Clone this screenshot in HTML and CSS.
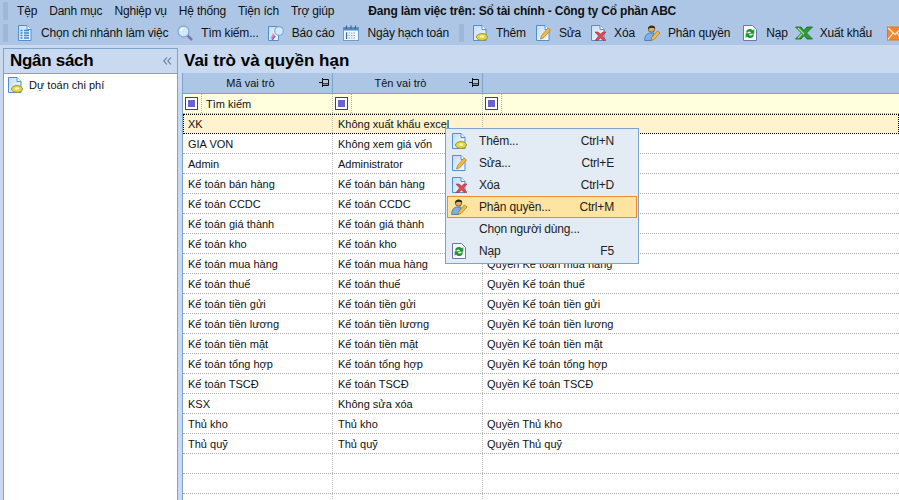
FILE: index.html
```html
<!DOCTYPE html>
<html lang="vi">
<head>
<meta charset="utf-8">
<title>Vai trò và quyền hạn</title>
<link rel="stylesheet" href="styles.css">
</head>
<body>
<svg class="defs" width="0" height="0">
  <defs>
    <linearGradient id="pg" x1="0" y1="0" x2="1" y2="1">
      <stop offset="0" stop-color="#c4dcf5"/>
      <stop offset="1" stop-color="#f6fbff"/>
    </linearGradient>
    <symbol id="page" viewBox="0 0 16 16">
      <path d="M1.500.5H10L14 4.500V15.500H1.500Z" fill="url(#pg)" stroke="#4f90d0"/>
      <path d="M10 .5V4.500H14" fill="#fff" stroke="#4f90d0"/>
    </symbol>
    <symbol id="add" viewBox="0 0 16 16">
      <use href="#page" width="16" height="16"/>
      <ellipse cx="10" cy="12" rx="5.500" ry="3.400" fill="#e3d648" stroke="#a0932a"/>
      <ellipse cx="10" cy="11.500" rx="2.200" ry="1.200" fill="#f9f3ab"/>
    </symbol>
    <symbol id="edit" viewBox="0 0 16 16">
      <use href="#page" width="16" height="16"/>
      <path d="M5.500 14 6.500 10.500 13 3 15.500 5 9 12.500Z" fill="#f0bd48" stroke="#b5842a" stroke-width=".8"/>
    </symbol>
    <symbol id="del" viewBox="0 0 16 16">
      <use href="#page" width="16" height="16"/>
      <path d="M5 7H8L10.500 9 13 7H16L12.500 11 16 15.500H13L10.500 13 8 15.500H5L8.500 11Z" fill="#dc4a52" stroke="#a82f38" stroke-width=".6"/>
    </symbol>
    <symbol id="user" viewBox="0 0 16 16">
      <circle cx="7.500" cy="4" r="3.200" fill="#dfae63" stroke="#6b4f24" stroke-width=".8"/>
      <path d="M4 4C4 0 11.500-.500 11.200 3.500 8.500 2.300 6.500 3 4 4Z" fill="#2b2618"/>
      <path d="M.7 15.500C.5 10 3.500 8 6.500 8H10L7 15.500Z" fill="#7db1e6" stroke="#3f7cbd" stroke-width=".9"/>
      <path d="M7 15.500 8 12 13.500 6 16 8 10 14.500Z" fill="#f0bd48" stroke="#a97a20" stroke-width=".8"/>
    </symbol>
    <symbol id="refresh" viewBox="0 0 14 16">
      <path d="M.5.5H9.500L13.500 4.500V15.500H.5Z" fill="#fbfbff" stroke="#6b78b0"/>
      <path d="M3 7.500C3.500 3.500 8 3 10 5.500L11.300 4V8.700H6.500L8 7.300C7 6 5.200 6.300 4.800 7.500ZM11 9.500C10.500 13.500 6 14 4 11.500L2.700 13V8.300H7.500L6 9.700C7 11 8.800 10.700 9.200 9.500Z" fill="#169a2b"/>
    </symbol>
    <symbol id="excel" viewBox="0 0 18 14">
      <path d="M.5 1H6L9 4.500 12 1H17.500L11.500 7 17.500 13H12L9 9.500 6 13H.5L6.500 7Z" fill="#2f9a3a" stroke="#136b21" stroke-width=".8"/>
      <path d="M3 2 9 8M3 12 7 8" stroke="#a6e097" stroke-width="1.200"/>
    </symbol>
    <symbol id="mail" viewBox="0 0 16 14">
      <rect x=".5" y=".5" width="15" height="13" fill="#f5862e" stroke="#e0761f"/>
      <path d="M1 1.500 8 8 15 1.500M1 13 6 6.500M15 13 10 6.500" fill="none" stroke="#fff0dd" stroke-width="1.200"/>
    </symbol>
    <symbol id="list" viewBox="0 0 16 16">
      <use href="#page" width="16" height="16"/>
      <path d="M3.500 5.500H5.500M7 5.500H12M3.500 8H5.500M7 8H12M3.500 10.500H5.500M7 10.500H12M3.500 13H5.500M7 13H12" stroke="#3f86cc" stroke-width="1.300"/>
    </symbol>
    <symbol id="search" viewBox="0 0 16 16">
      <path d="M10 10 15 15" stroke="#8d6fb8" stroke-width="2.600"/>
      <circle cx="6.500" cy="6.500" r="5.500" fill="#d3e9fa" stroke="#7fa9d4" stroke-width="1.300"/>
      <path d="M3.500 6C4 4.300 5.200 3.300 6.800 3.200" fill="none" stroke="#fff" stroke-width="1.300"/>
    </symbol>
    <symbol id="report" viewBox="0 0 16 16">
      <path d="M.5 1.500H10.500V15.500H.5Z" fill="url(#pg)" stroke="#4f90d0"/>
      <path d="M2 14 5 8 8 12Z" fill="#d98fb5"/>
      <path d="M7 11 4 15" stroke="#8d6fb8" stroke-width="1.800"/>
      <circle cx="11" cy="6" r="4.300" fill="#d3e9fa" stroke="#7fa9d4" stroke-width="1.200"/>
    </symbol>
    <symbol id="calendar" viewBox="0 0 16 16">
      <rect x=".5" y="2.500" width="15" height="13" fill="#f4f8fd" stroke="#6f9bd0"/>
      <rect x=".5" y="2.500" width="15" height="3" fill="#4d8cc8"/>
      <path d="M3.500.5V4M8 .5V4M12.500.5V4" stroke="#46648c" stroke-width="1.200"/>
      <path d="M3 8H13M3 10.500H13M3 13H13" stroke="#7fa8d8" stroke-dasharray="1.500 1"/>
      <path d="M3.500 7.500V14" stroke="#2e6fb8" stroke-width="1.200"/>
    </symbol>
    <symbol id="pin" viewBox="0 0 10 9">
      <path d="M0 4.500H3M3.500 1.500H9.500V7.500H3.500ZM3.500 0V9M3.500 5.800H9.500" fill="none" stroke="#111"/>
    </symbol>
    <symbol id="chev" viewBox="0 0 9 8">
      <path d="M4 .5.800 4 4 7.500M8 .5 4.800 4 8 7.500" fill="none" stroke="#5a7799" stroke-width="1.100"/>
    </symbol>
  </defs>
</svg>

<div class="topbar">
  <nav class="menubar">
    <span class="grip"></span>
    <span class="menu-item">Tệp</span>
    <span class="menu-item">Danh mục</span>
    <span class="menu-item">Nghiệp vụ</span>
    <span class="menu-item">Hệ thống</span>
    <span class="menu-item">Tiện ích</span>
    <span class="menu-item">Trợ giúp</span>
    <span class="working">Đang làm việc trên: Sổ tài chính - Công ty Cổ phần ABC</span>
  </nav>
  <div class="toolbar">
    <span class="grip"></span>
    <span class="tool tool-first"><svg class="ico"><use href="#list"/></svg>Chọn chi nhánh làm việc</span>
    <span class="tool"><svg class="ico"><use href="#search"/></svg>Tìm kiếm...</span>
    <span class="tool"><svg class="ico"><use href="#report"/></svg>Báo cáo</span>
    <span class="tool"><svg class="ico"><use href="#calendar"/></svg>Ngày hạch toán</span>
    <span class="grip grip-mid"></span>
    <span class="tool"><svg class="ico"><use href="#add"/></svg>Thêm</span>
    <span class="tool"><svg class="ico"><use href="#edit"/></svg>Sửa</span>
    <span class="tool"><svg class="ico"><use href="#del"/></svg>Xóa</span>
    <span class="tool tool-wide"><svg class="ico"><use href="#user"/></svg>Phân quyền</span>
    <span class="tool tool-narrow"><svg class="ico"><use href="#refresh"/></svg>Nạp</span>
    <span class="tool"><svg class="ico ico-excel"><use href="#excel"/></svg>Xuất khẩu</span>
    <span class="sep"></span>
    <svg class="ico ico-mail"><use href="#mail"/></svg>
  </div>
</div>

<div class="workspace">
  <aside class="sidebar">
    <header class="side-head">
      <span>Ngân sách</span>
      <svg class="chev"><use href="#chev"/></svg>
    </header>
    <div class="side-body">
      <div class="side-item"><svg class="ico"><use href="#add"/></svg>Dự toán chi phí</div>
    </div>
  </aside>
  <main class="content">
    <h1 class="title">Vai trò và quyền hạn</h1>
    <div class="grid">
      <div class="row head">
        <div class="cell">Mã vai trò<svg class="pin"><use href="#pin"/></svg></div>
        <div class="cell">Tên vai trò<svg class="pin"><use href="#pin"/></svg></div>
        <div class="cell"></div>
      </div>
      <div class="row filter">
        <div class="cell"><span class="check-wrap"><span class="check"></span></span>Tìm kiếm</div>
        <div class="cell"><span class="check-wrap"><span class="check"></span></span></div>
        <div class="cell"><span class="check-wrap"><span class="check"></span></span></div>
      </div>
      <div class="row selected"><div class="cell">XK</div><div class="cell">Không xuất khẩu excel</div><div class="cell"></div></div>
      <div class="row"><div class="cell">GIA VON</div><div class="cell">Không xem giá vốn</div><div class="cell"></div></div>
      <div class="row"><div class="cell">Admin</div><div class="cell">Administrator</div><div class="cell"></div></div>
      <div class="row"><div class="cell">Kế toán bán hàng</div><div class="cell">Kế toán bán hàng</div><div class="cell">Quyền Kế toán bán hàng</div></div>
      <div class="row"><div class="cell">Kế toán CCDC</div><div class="cell">Kế toán CCDC</div><div class="cell">Quyền Kế toán CCDC</div></div>
      <div class="row"><div class="cell">Kế toán giá thành</div><div class="cell">Kế toán giá thành</div><div class="cell">Quyền Kế toán giá thành</div></div>
      <div class="row"><div class="cell">Kế toán kho</div><div class="cell">Kế toán kho</div><div class="cell">Quyền Kế toán kho</div></div>
      <div class="row"><div class="cell">Kế toán mua hàng</div><div class="cell">Kế toán mua hàng</div><div class="cell">Quyền Kế toán mua hàng</div></div>
      <div class="row"><div class="cell">Kế toán thuế</div><div class="cell">Kế toán thuế</div><div class="cell">Quyền Kế toán thuế</div></div>
      <div class="row"><div class="cell">Kế toán tiền gửi</div><div class="cell">Kế toán tiền gửi</div><div class="cell">Quyền Kế toán tiền gửi</div></div>
      <div class="row"><div class="cell">Kế toán tiền lương</div><div class="cell">Kế toán tiền lương</div><div class="cell">Quyền Kế toán tiền lương</div></div>
      <div class="row"><div class="cell">Kế toán tiền mặt</div><div class="cell">Kế toán tiền mặt</div><div class="cell">Quyền Kế toán tiền mặt</div></div>
      <div class="row"><div class="cell">Kế toán tổng hợp</div><div class="cell">Kế toán tổng hợp</div><div class="cell">Quyền Kế toán tổng hợp</div></div>
      <div class="row"><div class="cell">Kế toán TSCĐ</div><div class="cell">Kế toán TSCĐ</div><div class="cell">Quyền Kế toán TSCĐ</div></div>
      <div class="row"><div class="cell">KSX</div><div class="cell">Không sửa xóa</div><div class="cell"></div></div>
      <div class="row"><div class="cell">Thủ kho</div><div class="cell">Thủ kho</div><div class="cell">Quyền Thủ kho</div></div>
      <div class="row"><div class="cell">Thủ quỹ</div><div class="cell">Thủ quỹ</div><div class="cell">Quyền Thủ quỹ</div></div>
      <div class="row"><div class="cell"></div><div class="cell"></div><div class="cell"></div></div>
      <div class="row"><div class="cell"></div><div class="cell"></div><div class="cell"></div></div>
      <div class="row"><div class="cell"></div><div class="cell"></div><div class="cell"></div></div>
    </div>
  </main>
</div>

<div class="context-menu">
  <div class="cm-item"><svg class="ico"><use href="#add"/></svg><span class="cm-label">Thêm...</span><span class="cm-key">Ctrl+N</span></div>
  <div class="cm-item"><svg class="ico"><use href="#edit"/></svg><span class="cm-label">Sửa...</span><span class="cm-key">Ctrl+E</span></div>
  <div class="cm-item"><svg class="ico"><use href="#del"/></svg><span class="cm-label">Xóa</span><span class="cm-key">Ctrl+D</span></div>
  <div class="cm-item active"><svg class="ico"><use href="#user"/></svg><span class="cm-label">Phân quyền...</span><span class="cm-key">Ctrl+M</span></div>
  <div class="cm-item"><span class="ico"></span><span class="cm-label">Chọn người dùng...</span></div>
  <div class="cm-item"><svg class="ico"><use href="#refresh"/></svg><span class="cm-label">Nạp</span><span class="cm-key">F5</span></div>
</div>
</body>
</html>
```
FILE: styles.css
```css
* { box-sizing: border-box; }
html, body { height: 100%; }
body {
  margin: 0;
  width: 899px;
  height: 500px;
  overflow: hidden;
  position: relative;
  background: #c9daf0;
  color: #111;
  font: 12px "Liberation Sans", Arial, sans-serif;
  letter-spacing: -0.18px;
  display: flex;
  flex-direction: column;
}
.defs { position: absolute; }
.topbar { background: #adc6e5; height: 45px; flex: none; }
.menubar, .toolbar { display: flex; align-items: center; white-space: nowrap; }
.menubar { height: 21px; }
.toolbar { height: 24px; }
.grip {
  width: 5px;
  height: 18px;
  margin-left: 3px;
  background-image: radial-gradient(#8ea7c6 0.6px, transparent 0.8px);
  background-size: 2px 2px;
  flex: none;
}
.menu-item { margin-left: 9px; margin-right: 3px; }
.working { font-weight: bold; margin-left: 31px; }
.ico { width: 16px; height: 16px; flex: none; margin-right: 8px; display: block; }
.tool { display: flex; align-items: center; margin-right: 9px; }
.tool-first { margin-left: 9px; }
.tool-wide { margin-right: 12px; }
.tool-narrow { margin-right: 7px; }
.ico-excel { width: 18px; height: 14px; margin-right: 7px; }
.grip-mid { margin: 0 8px 0 1px; }
.sep { width: 2px; height: 16px; background: #8fb0d8; margin: 0 6px 0 0; }
.ico-mail { margin: 0; height: 15px; }
.workspace { flex: 1; display: flex; padding: 3px 0 0 3px; min-height: 0; }
.sidebar {
  width: 175px;
  flex: none;
  display: flex;
  flex-direction: column;
  border: 1px solid #7ea3cc;
  border-bottom: 0;
  background: #fff;
}
.side-head {
  height: 25px;
  flex: none;
  background: #c9daf0;
  border-bottom: 1px solid #7ea3cc;
  display: flex;
  align-items: center;
  justify-content: space-between;
  padding: 0 5px 0 6px;
  font-size: 17px;
  font-weight: bold;
  letter-spacing: -0.3px;
  color: #000;
}
.chev { width: 9px; height: 8px; }
.side-item { display: flex; align-items: center; height: 22px; padding-left: 3px; font-size: 11px; letter-spacing: 0; }
.side-item .ico { margin-right: 6px; }
.content { flex: 1; min-width: 0; display: flex; flex-direction: column; margin-left: 4px; }
.title {
  margin: 0;
  height: 25px;
  flex: none;
  display: flex;
  align-items: center;
  padding-left: 2px;
  font-size: 17px;
  font-weight: bold;
  letter-spacing: 0;
  color: #000;
}
.grid { flex: 1; background: #fff; border-left: 1px solid #7ea3cc; overflow: hidden; font-size: 11px; letter-spacing: 0; }
.row { display: grid; grid-template-columns: 150px 150px 1fr; height: 20px; border-bottom: 1px dotted #aaa; }
.cell {
  display: flex;
  align-items: center;
  padding-left: 5px;
  border-right: 1px dotted #bbb;
  white-space: nowrap;
  overflow: hidden;
  min-width: 0;
}
.cell:last-child { border-right: 0; padding-left: 4px; }
.head { height: 21px; background: #adc6e5; border-bottom: 1px solid #7ea3cc; }
.head .cell { justify-content: center; position: relative; border-right: 1px solid #7ea3cc; padding: 0 14px 0 0; }
.head .cell:last-child { border-right: 0; }
.pin { position: absolute; right: 3px; top: 5px; width: 10px; height: 9px; }
.filter { background: #ffffde; }
.filter .cell, .filter .cell:last-child { padding-left: 2px; }
.check-wrap {
  align-self: stretch;
  width: 17px;
  display: flex;
  align-items: center;
  margin-right: 4px;
  border-right: 1px dotted #aaa;
  flex: none;
}
.check {
  width: 13px;
  height: 13px;
  border: 1px solid #3e3e7c;
  background: #6a63cf;
  box-shadow: inset 0 0 0 2px #fff;
  flex: none;
}
.selected { background: #fff3cf; outline: 1px dotted #000; outline-offset: -1px; }
.context-menu {
  position: absolute;
  left: 445px;
  top: 128px;
  width: 194px;
  height: 136px;
  padding: 1px;
  background: #e3ebf5;
  border: 1px solid #7ea3cc;
}
.cm-item {
  height: 22px;
  display: flex;
  align-items: center;
  padding-left: 3px;
  padding-right: 22px;
  border: 1px solid transparent;
  color: #222;
}
.cm-item .ico { margin-right: 12px; }
.cm-label { flex: 1; }
.active { background: #fde4a0; border-color: #f08a2c; }
```
